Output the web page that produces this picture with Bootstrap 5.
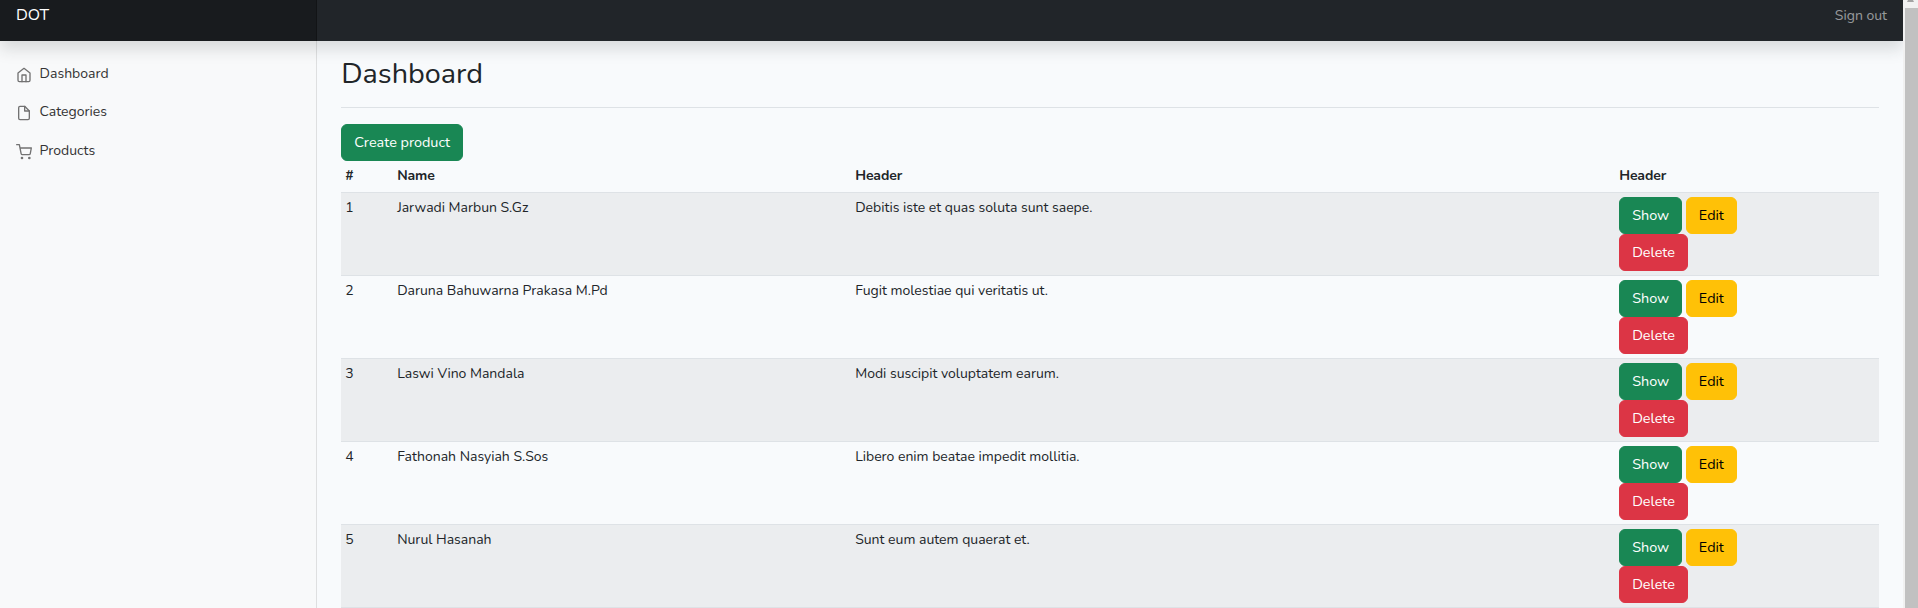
<!DOCTYPE html>
<html lang="en">
<head>
<meta charset="utf-8">
<meta name="viewport" content="width=device-width, initial-scale=1">
<title>Dashboard</title>
<link href="https://cdn.jsdelivr.net/npm/bootstrap@5.3.0/dist/css/bootstrap.min.css" rel="stylesheet">
<style>
  body {
    font-family: Nunito, Lato, sans-serif;
    font-size: 14px;
    line-height: 1.6;
    background: #f8fafc;
    color: #212529;
  }
  .topbar { height: 41px; z-index: 10; background: #212529; }
  .brand {
    font-size: 16px;
    line-height: 25.6px;
    padding-top: 3px;
    background: rgba(0, 0, 0, .25);
    box-shadow: inset -1px 0 0 rgba(0, 0, 0, .25);
  }
  .signout { padding-top: 5.3px; color: rgba(255, 255, 255, .55); }
  .side { box-shadow: inset -1px 0 0 rgba(0, 0, 0, .1); background: #f8f9fa; padding-top: 14px; }
  .side .nav-link { color: #333; padding: 8px 16px; }
  .feather {
    width: 16px; height: 16px; margin-right: 4px; vertical-align: text-bottom;
    fill: none; stroke: #727272; stroke-width: 2; stroke-linecap: round; stroke-linejoin: round;
  }
  .page-title { padding-top: 16.1px; }
  .h2 { font-size: 28.8px; font-weight: 400; margin-bottom: 7.2px; }
  .btn {
    --bs-btn-font-size: 14.4px;
    --bs-btn-line-height: 1.6;
    --bs-btn-border-radius: 6px;
  }
  .table { --bs-table-color: #212529; --bs-table-striped-bg: rgba(0, 0, 0, .05); table-layout: fixed; border-color: #dee2e6; }
  .table th { font-weight: 700; letter-spacing: -.1px; padding-top: 4.5px; padding-bottom: 4.2px; }
  .scroller { width: 15px; background: #f1f1f1; }
  .scroller-up { height: 8px; }
  .scroller-thumb { margin-left: 2px; background: #c1c1c1; }
</style>
</head>
<body class="vh-100 d-flex overflow-hidden">
<div class="flex-grow-1 d-flex flex-column overflow-hidden">
  <header class="topbar d-flex flex-shrink-0 position-relative shadow">
    <a class="brand col-2 px-3 text-white text-decoration-none" href="#">DOT</a>
    <a class="signout ms-auto px-3 text-decoration-none" href="#">Sign out</a>
  </header>
  <div class="flex-grow-1 d-flex overflow-hidden">
    <nav class="side col-2">
      <ul class="nav flex-column">
        <li class="nav-item"><a class="nav-link" href="#"><svg class="feather" viewBox="0 0 24 24"><path d="M3 9l9-7 9 7v11a2 2 0 0 1-2 2H5a2 2 0 0 1-2-2z"/><polyline points="9 22 9 12 15 12 15 22"/></svg>
          Dashboard</a></li>
        <li class="nav-item"><a class="nav-link" href="#"><svg class="feather" viewBox="0 0 24 24"><path d="M13 2H6a2 2 0 0 0-2 2v16a2 2 0 0 0 2 2h12a2 2 0 0 0 2-2V9z"/><polyline points="13 2 13 9 20 9"/></svg>
          Categories</a></li>
        <li class="nav-item"><a class="nav-link" href="#"><svg class="feather" viewBox="0 0 24 24"><circle cx="9" cy="21" r="1"/><circle cx="20" cy="21" r="1"/><path d="M1 1h4l2.68 13.39a2 2 0 0 0 2 1.61h9.72a2 2 0 0 0 2-1.61L23 6H6"/></svg>
          Products</a></li>
      </ul>
    </nav>
    <main class="col-10 px-4">
      <div class="page-title pb-2 mb-3 border-bottom">
        <h1 class="h2">Dashboard</h1>
      </div>
      <a class="btn btn-success" href="#">Create product</a>
      <table class="table table-striped table-sm">
        <colgroup><col style="width:52px"><col style="width:458px"><col style="width:764px"><col></colgroup>
        <thead><tr><th>#</th><th>Name</th><th>Header</th><th>Header</th></tr></thead>
        <tbody>
          <tr><td>1</td><td>Jarwadi Marbun S.Gz</td><td>Debitis iste et quas soluta sunt saepe.</td>
            <td><a class="btn btn-success" href="#">Show</a> <a class="btn btn-warning" href="#">Edit</a><form><button type="button" class="btn btn-danger">Delete</button></form></td></tr>
          <tr><td>2</td><td>Daruna Bahuwarna Prakasa M.Pd</td><td>Fugit molestiae qui veritatis ut.</td>
            <td><a class="btn btn-success" href="#">Show</a> <a class="btn btn-warning" href="#">Edit</a><form><button type="button" class="btn btn-danger">Delete</button></form></td></tr>
          <tr><td>3</td><td>Laswi Vino Mandala</td><td>Modi suscipit voluptatem earum.</td>
            <td><a class="btn btn-success" href="#">Show</a> <a class="btn btn-warning" href="#">Edit</a><form><button type="button" class="btn btn-danger">Delete</button></form></td></tr>
          <tr><td>4</td><td>Fathonah Nasyiah S.Sos</td><td>Libero enim beatae impedit mollitia.</td>
            <td><a class="btn btn-success" href="#">Show</a> <a class="btn btn-warning" href="#">Edit</a><form><button type="button" class="btn btn-danger">Delete</button></form></td></tr>
          <tr><td>5</td><td>Nurul Hasanah</td><td>Sunt eum autem quaerat et.</td>
            <td><a class="btn btn-success" href="#">Show</a> <a class="btn btn-warning" href="#">Edit</a><form><button type="button" class="btn btn-danger">Delete</button></form></td></tr>
        </tbody>
      </table>
    </main>
  </div>
</div>
<div class="scroller d-flex flex-column flex-shrink-0">
  <div class="scroller-up text-center lh-1"><svg class="d-block mx-auto" width="7" height="2" viewBox="0 0 7 2"><path d="M1 0h5l1 2H0z" fill="#a3a3a3"/></svg></div>
  <div class="scroller-thumb flex-grow-1"></div>
</div>
<script src="https://cdn.jsdelivr.net/npm/bootstrap@5.3.0/dist/js/bootstrap.bundle.min.js"></script>
</body>
</html>
